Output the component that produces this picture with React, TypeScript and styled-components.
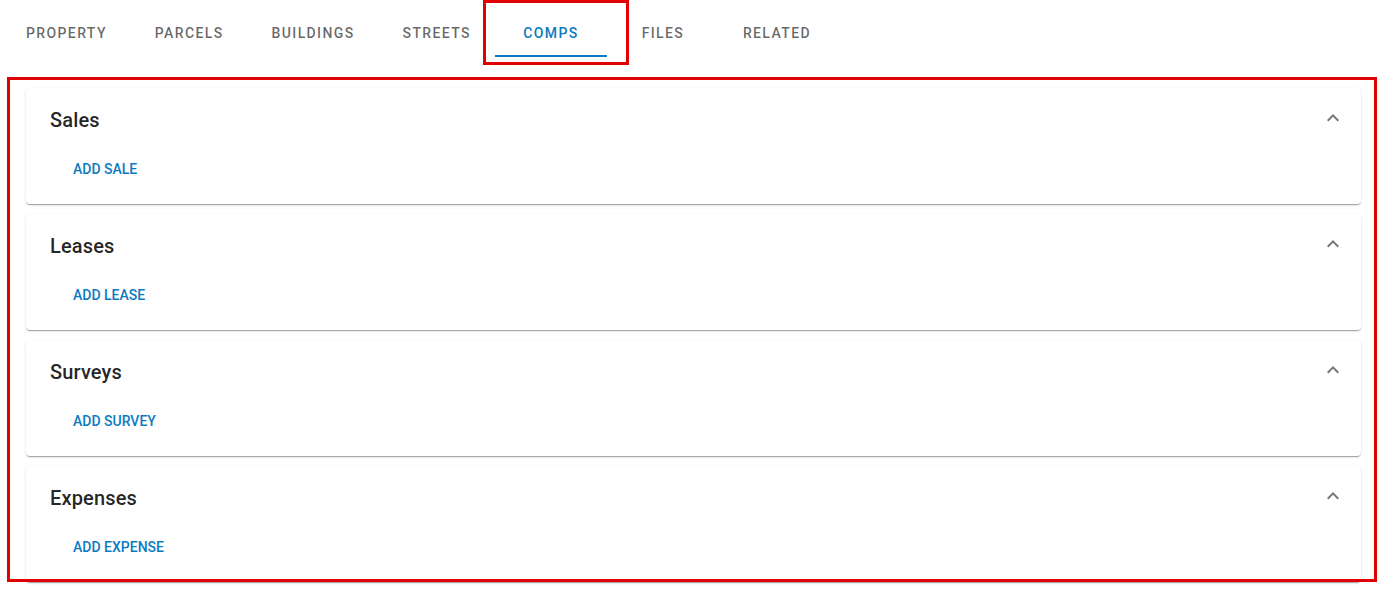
import styled, { createGlobalStyle } from 'styled-components'

const GlobalStyle = createGlobalStyle`
  html, body {
    margin: 0;
    padding: 0;
    background: #ffffff;
    font-family: Roboto, "Liberation Sans", Arial, sans-serif;
  }
`

const Page = styled.div`
  position: relative;
  width: 1377px;
  height: 594px;
  overflow: hidden;
  padding-top: 9px;
  box-sizing: border-box;
`

const TabBar = styled.nav`
  display: flex;
  height: 48px;
  padding-left: 2px;
`

const Tab = styled.button<{ $active?: boolean }>`
  position: relative;
  min-width: 112px;
  padding: 0 24px;
  height: 48px;
  border: none;
  background: transparent;
  font-family: Roboto, sans-serif;
  font-size: 14px;
  font-weight: 500;
  letter-spacing: 1.38px;
  text-transform: uppercase;
  color: ${p => (p.$active ? '#0b7bc1' : 'rgba(0, 0, 0, 0.6)')};
  cursor: pointer;

  &::after {
    content: '';
    display: ${p => (p.$active ? 'block' : 'none')};
    position: absolute;
    left: 0;
    right: 0;
    bottom: 0;
    height: 2px;
    background: #0b7bc1;
  }
`

const Sections = styled.div`
  display: flex;
  flex-direction: column;
  gap: 10px;
  padding: 31px 16px 0 26px;
`

const Card = styled.section`
  background: #fff;
  border-radius: 4px;
  box-shadow: 0px 2px 1px -1px rgba(0, 0, 0, 0.2), 0px 1px 1px 0px rgba(0, 0, 0, 0.14),
    0px 1px 3px 0px rgba(0, 0, 0, 0.12);
`

const CardHeader = styled.div`
  display: flex;
  align-items: center;
  justify-content: space-between;
  height: 64px;
  padding: 0 16px 0 24px;
`

const CardTitle = styled.h2`
  margin: 0;
  font-size: 20px;
  font-weight: 500;
  color: rgba(0, 0, 0, 0.87);
  letter-spacing: 0.15px;
`

const Chevron = styled.svg`
  width: 24px;
  height: 24px;
  fill: rgba(0, 0, 0, 0.54);
  margin-top: -4px;
`

const CardBody = styled.div`
  padding: 0 16px 16px 39px;
`

const AddButton = styled.button`
  height: 36px;
  padding: 0 8px 2px;
  border: none;
  background: transparent;
  border-radius: 4px;
  font-family: Roboto, sans-serif;
  font-size: 14px;
  font-weight: 500;
  letter-spacing: 0;
  text-transform: uppercase;
  color: #0b7bc1;
  cursor: pointer;
`

const Highlight = styled.div<{ $x: number; $y: number; $w: number; $h: number }>`
  position: absolute;
  left: ${p => p.$x}px;
  top: ${p => p.$y}px;
  width: ${p => p.$w}px;
  height: ${p => p.$h}px;
  border: 3px solid #e00000;
  box-sizing: border-box;
  pointer-events: none;
`

const tabs = ['Property', 'Parcels', 'Buildings', 'Streets', 'Comps', 'Files', 'Related']

const sections = [
  { title: 'Sales', action: 'Add Sale' },
  { title: 'Leases', action: 'Add Lease' },
  { title: 'Surveys', action: 'Add Survey' },
  { title: 'Expenses', action: 'Add Expense' },
]

function ExpandLess() {
  return (
    <Chevron viewBox="0 0 24 24">
      <path d="M12 8l-6 6 1.41 1.41L12 10.83l4.59 4.58L18 14z" />
    </Chevron>
  )
}

function App() {
  return (
    <Page>
      <GlobalStyle />
      <TabBar>
        {tabs.map(t => (
          <Tab key={t} $active={t === 'Comps'}>
            {t}
          </Tab>
        ))}
      </TabBar>
      <Sections>
        {sections.map(s => (
          <Card key={s.title}>
            <CardHeader>
              <CardTitle>{s.title}</CardTitle>
              <ExpandLess />
            </CardHeader>
            <CardBody>
              <AddButton>{s.action}</AddButton>
            </CardBody>
          </Card>
        ))}
      </Sections>
      <Highlight $x={483} $y={0} $w={146} $h={65} />
      <Highlight $x={7} $y={77} $w={1370} $h={505} />
    </Page>
  )
}

export default App
